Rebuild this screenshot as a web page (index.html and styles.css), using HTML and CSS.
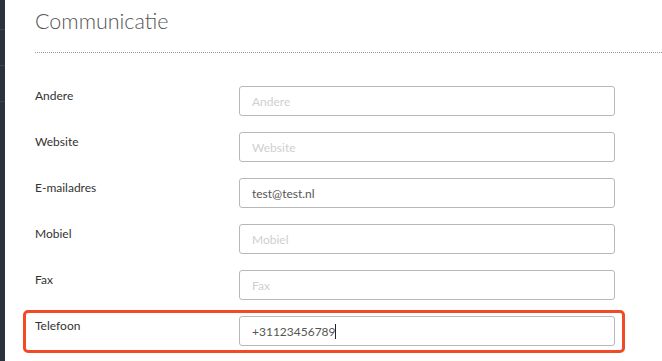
FILE: index.html
```html
<!DOCTYPE html>
<html lang="nl">
<head>
    <meta charset="UTF-8">
    <title>Communicatie</title>
    <link rel="stylesheet" href="styles.css">
</head>
<body>
    <div class="page">
        <!-- Donkere zijbalk -->
        <div class="sidebar">
            <div class="sidebar-item"></div>
            <div class="sidebar-item"></div>
            <div class="sidebar-item"></div>
        </div>

        <div class="content">
            <h2 class="section-title">Communicatie</h2>

            <form class="form">
                <div class="form-row">
                    <label class="form-label" for="andere">Andere</label>
                    <input class="form-input" id="andere" type="text" placeholder="Andere">
                </div>
                <div class="form-row">
                    <label class="form-label" for="website">Website</label>
                    <input class="form-input" id="website" type="text" placeholder="Website">
                </div>
                <div class="form-row">
                    <label class="form-label" for="email">E-mailadres</label>
                    <input class="form-input" id="email" type="text" placeholder="E-mailadres" value="test@test.nl">
                </div>
                <div class="form-row">
                    <label class="form-label" for="mobiel">Mobiel</label>
                    <input class="form-input" id="mobiel" type="text" placeholder="Mobiel">
                </div>
                <div class="form-row">
                    <label class="form-label" for="fax">Fax</label>
                    <input class="form-input" id="fax" type="text" placeholder="Fax">
                </div>
                <div class="form-row highlighted">
                    <label class="form-label" for="telefoon">Telefoon</label>
                    <div class="input-wrap">
                        <input class="form-input" id="telefoon" type="text" placeholder="Telefoon" value="+31123456789">
                        <span class="caret"></span>
                    </div>
                </div>
            </form>
        </div>
    </div>
</body>
</html>
```

FILE: styles.css
```css
/* Basis */
body {
    margin: 0;
    font-family: Lato, "Liberation Sans", sans-serif;
    background: #fff;
    color: #333;
    overflow: hidden;
}

.page {
    display: flex;
    min-height: 361px;
}

/* Zijbalk */
.sidebar {
    width: 5px;
    flex-shrink: 0;
    background: #2b323c;
    padding-top: 29px;
}

.sidebar-item {
    height: 35px;
    border-top: 1px solid #3c444f;
}

/* Inhoud */
.content {
    flex: 1;
    padding-left: 18px;
}

.section-title {
    margin: 8px 0 0 12px;
    font-size: 21.5px;
    line-height: 26px;
    font-weight: 300;
    color: #555;
    padding-bottom: 18px;
    border-bottom: 1px dotted #9a9a9a;
}

.form {
    margin-top: 27px;
    width: 602px;
    display: flex;
    flex-direction: column;
    gap: 3px;
}

/* Formulier rijen */
.form-row {
    display: flex;
    align-items: flex-start;
    padding: 3px 7px 4px 9px;
    border: 3px solid transparent;
    border-radius: 5px;
}

.form-row.highlighted {
    border-color: #f24a26;
}

.form-label {
    width: 204px;
    flex-shrink: 0;
    margin-top: 1px;
    font-size: 12px;
    line-height: 18px;
    color: #333;
}

.form-input {
    box-sizing: border-box;
    width: 376px;
    height: 30px;
    padding: 0 12px;
    border: 1px solid #b8b8b8;
    border-radius: 3px;
    font-family: inherit;
    font-size: 12px;
    color: #555;
    outline: none;
}

.form-input::placeholder {
    color: #cfcfcf;
}

.input-wrap {
    position: relative;
}

/* Cursor in het telefoon veld */
.caret {
    position: absolute;
    left: 96px;
    top: 8px;
    width: 1px;
    height: 15px;
    background: #222;
}
```
